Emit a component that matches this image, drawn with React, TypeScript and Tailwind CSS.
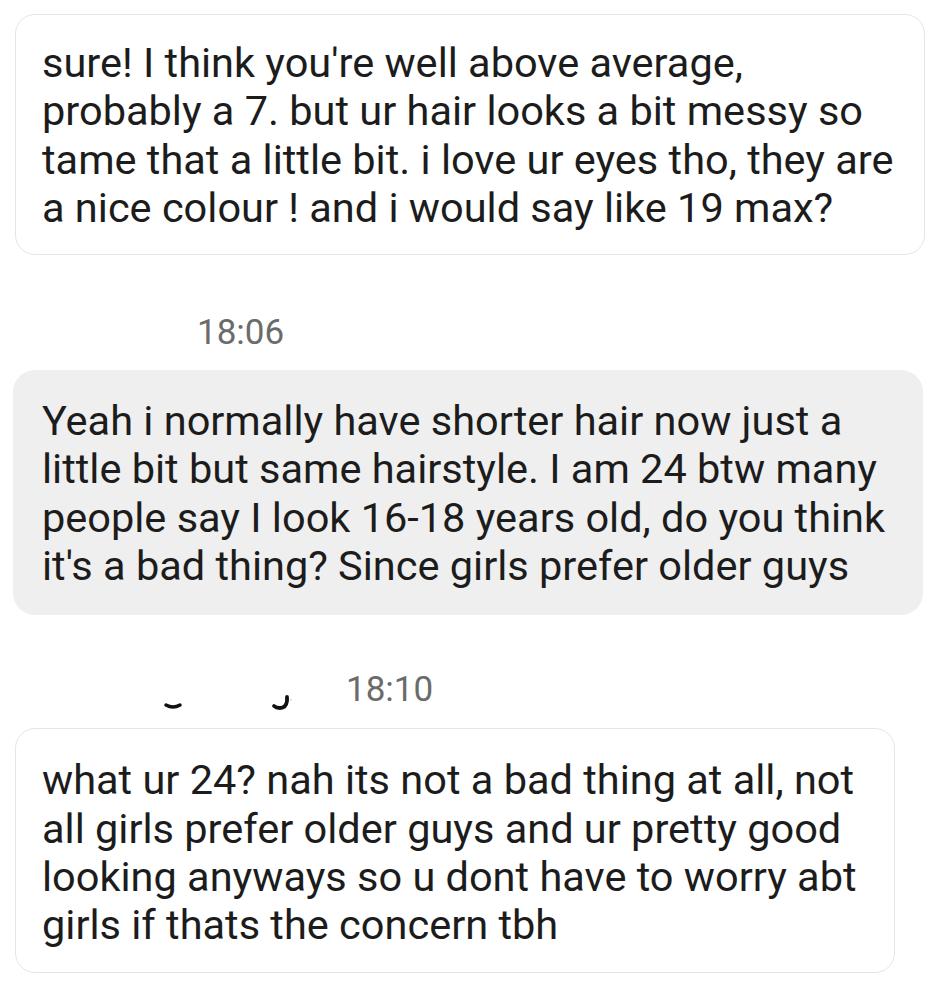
const font = { fontFamily: 'Roboto, "Noto Sans", sans-serif' };

function Stamp({ time, left }: { time: string; left: string }) {
  return (
    <div className={`flex h-[40px] items-center ${left} text-[35px] leading-[40px] text-[#6b6b6b]`}>
      {time}
    </div>
  );
}

export default function App() {
  return (
    <main className="min-h-screen w-[937px] bg-white pt-[14px] text-[#1c1c1c]" style={font}>
      <div className="ml-[15px] w-[910px] whitespace-nowrap rounded-[20px] border border-[#e5e5e5] bg-white pt-[24px] pb-[22px] pl-[26px] text-[41.5px] leading-[48.3px]">
        sure! I think you're well above average,
        <br />
        probably a 7. but ur hair looks a bit messy so
        <br />
        tame that a little bit. i love ur eyes tho, they are
        <br />
        a nice colour ! and i would say like 19 max?
      </div>

      <div className="mt-[58px] mb-[17px]">
        <Stamp time="18:06" left="ml-[197px]" />
      </div>

      <div className="ml-[13px] w-[910px] whitespace-nowrap rounded-[22px] bg-[#efefef] pt-[27px] pb-[25px] pl-[29px] text-[41.5px] leading-[48.3px]">
        Yeah i normally have shorter hair now just a
        <br />
        little bit but same hairstyle. I am 24 btw many
        <br />
        people say I look 16-18 years old, do you think
        <br />
        it's a bad thing? Since girls prefer older guys
      </div>

      <div className="mt-[55px] mb-[18px] flex items-center">
        <svg className="ml-[163px]" width="20" height="40" viewBox="0 0 20 40">
          <path d="M3 35 Q10 39 17 35" stroke="#111" strokeWidth="3.4" fill="none" strokeLinecap="round" />
        </svg>
        <svg className="ml-[86px]" width="24" height="40" viewBox="0 0 24 40">
          <path d="M18 27 L18 31 Q17 38 11 38 Q7 38 5 36" stroke="#111" strokeWidth="3.8" fill="none" strokeLinecap="round" />
          <circle cx="22" cy="30" r="0.8" fill="#bbb" />
        </svg>
        <Stamp time="18:10" left="ml-[53px]" />
      </div>

      <div className="ml-[15px] w-[880px] whitespace-nowrap rounded-[20px] border border-[#e5e5e5] bg-white pt-[27px] pb-[22px] pl-[26px] text-[41.5px] leading-[48.3px]">
        what ur 24? nah its not a bad thing at all, not
        <br />
        all girls prefer older guys and ur pretty good
        <br />
        looking anyways so u dont have to worry abt
        <br />
        girls if thats the concern tbh
      </div>
    </main>
  );
}
